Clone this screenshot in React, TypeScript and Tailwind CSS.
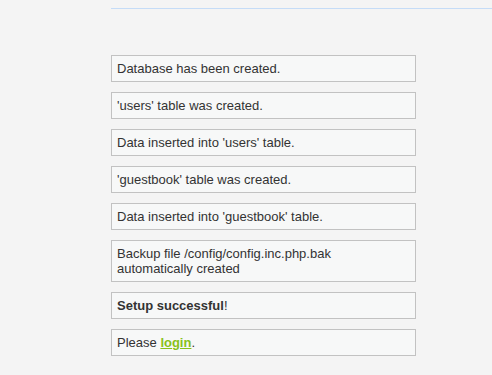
import React from "react";

const Box = ({ children }: { children: React.ReactNode }) => (
  <div className="w-[305px] border border-[#c2c2c2] bg-[#f7f8f8] px-[5px] py-[5px] text-[13px] leading-[15px] text-[#333333]">
    {children}
  </div>
);

export default function App() {
  return (
    <div
      className="min-h-screen w-full bg-[#f4f4f4] pl-[111px]"
      style={{ fontFamily: '"Liberation Sans", Arial, sans-serif' }}
    >
      <div className="h-[8px]" />
      <div className="h-px w-full bg-[#c5dcf7]" />
      <div className="mt-[46px] flex flex-col gap-[10px]">
        <Box>Database has been created.</Box>
        <Box>'users' table was created.</Box>
        <Box>Data inserted into 'users' table.</Box>
        <Box>'guestbook' table was created.</Box>
        <Box>Data inserted into 'guestbook' table.</Box>
        <Box>
          Backup file /config/config.inc.php.bak
          <br />
          automatically created
        </Box>
        <Box>
          <b>Setup successful</b>!
        </Box>
        <Box>
          Please{" "}
          <a href="#" className="font-bold text-[#88c11b] underline">
            login
          </a>
          .
        </Box>
      </div>
    </div>
  );
}
